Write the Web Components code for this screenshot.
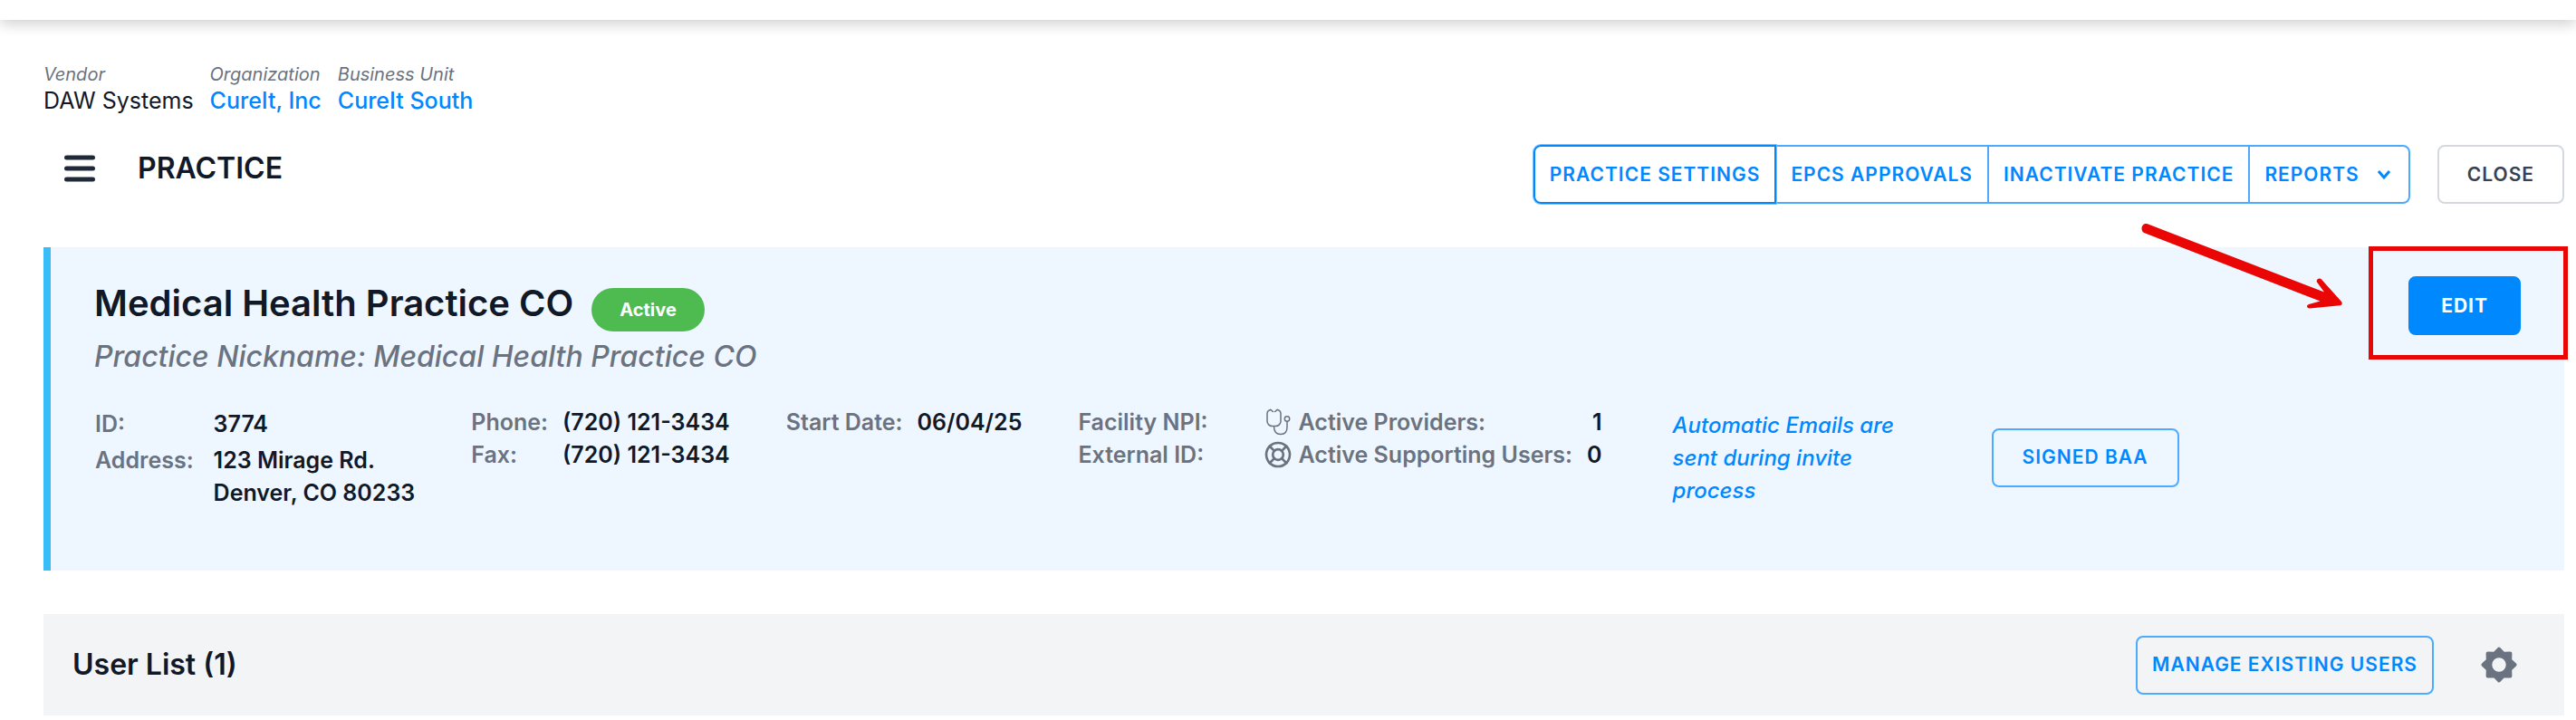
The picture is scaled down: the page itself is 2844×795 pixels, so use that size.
<!DOCTYPE html>
<html lang="en">
<head>
<meta charset="utf-8">
<title>Practice</title>
<style>
  body {
    margin: 0;
    background: #fff;
    color: #111827;
    font-family: Inter, "Liberation Sans", sans-serif;
    font-size: 25px;
    line-height: 36px;
    overflow-x: hidden;
  }
</style>
</head>
<body>
<practice-page></practice-page>

<script>
class AppButton extends HTMLElement {
  constructor() {
    super();
    this._root = this.attachShadow({ mode: "open" });
  }

  connectedCallback() {
    this._root.innerHTML = `
    <style>
      :host {
        display: inline-block;
        --edge: #4daaff;
      }
      button {
        display: flex;
        align-items: center;
        justify-content: center;
        gap: 18px;
        box-sizing: border-box;
        height: 65px;
        margin: 0;
        padding: 0 var(--button-pad, 16px);
        border: 2px solid var(--edge);
        border-radius: var(--button-radius, 8px);
        background: transparent;
        color: #0088ff;
        font: 600 21px/28px Inter, "Liberation Sans", sans-serif;
        letter-spacing: 1px;
        text-transform: uppercase;
        white-space: nowrap;
        cursor: pointer;
      }
      :host([variant="neutral"]) button {
        border-color: #d5d9df;
        color: #374151;
        background: #fff;
      }
      :host([variant="primary"]) button {
        border-color: #0088ff;
        background: #0088ff;
        color: #fff;
        font-weight: 700;
      }
      :host([selected]) button {
        border-color: #0088ff;
        box-shadow: 0 0 0 1px #80c4ff;
      }
    </style>
    <button type="button"><slot></slot></button>
    `;
  }
}
customElements.define("app-button", AppButton);

class ButtonGroup extends HTMLElement {
  constructor() {
    super();
    this._root = this.attachShadow({ mode: "open" });
  }

  connectedCallback() {
    this._root.innerHTML = `
    <style>
      :host {
        display: flex;
      }
      ::slotted(*) {
        --button-radius: 0;
        margin-left: -2px;
      }
      ::slotted(:first-child) {
        --button-radius: 8px 0 0 8px;
        margin-left: 0;
      }
      ::slotted(:last-child) {
        --button-radius: 0 8px 8px 0;
      }
      ::slotted([selected]) {
        position: relative;
        z-index: 1;
      }
    </style>
    <slot></slot>
    `;
  }
}
customElements.define("button-group", ButtonGroup);

const icons = {
  menu: `<path d="M3.5 6h29M3.5 18h29M3.5 30h29" fill="none" stroke="currentColor" stroke-width="5" stroke-linecap="round"/>`,
  chevron: `<path d="M3 2l6 7 6-7" fill="none" stroke="currentColor" stroke-width="3"/>`,
  stethoscope: `
    <g fill="none" stroke="currentColor" stroke-width="1.5" stroke-linecap="round" stroke-linejoin="round">
      <path d="M6.500 1.500c-2 .5-3.500 2-3.500 4.500v8c0 3 2.500 5.500 5.500 5.500h4c3 0 5.500-2.500 5.500-5.500V6c0-2.500-1.500-4-3.500-4.500"/>
      <path d="M6.500 1.500c1.500-.5 1.500 2 3 2M14.500 1.500c-1.500-.5-1.500 2-3 2"/>
      <path d="M10.500 20c0 5 2.500 8.500 7.500 8.500s7-3 7-8v-6"/>
      <circle cx="25" cy="11.500" r="2.700"/>
    </g>`,
  support: `
    <g fill="none" stroke="currentColor" stroke-width="2.700" stroke-linecap="round" stroke-linejoin="round">
      <circle cx="15" cy="15" r="13"/>
      <circle cx="15" cy="15" r="5.800"/>
      <path d="M5.800 5.800l5.100 5.100M24.200 5.800l-5.100 5.100M5.800 24.200l5.100-5.100M24.200 24.200l-5.100-5.100"/>
    </g>`,
  gear: `
    <path fill="currentColor" fill-rule="evenodd" stroke="currentColor" stroke-width="4" stroke-linejoin="round" d="M37.500 20L32.200 25 32.400 32.400 25 32.200 20 37.500 15 32.200 7.600 32.400 7.800 25 2.500 20 7.800 15 7.600 7.600 15 7.800 20 2.500 25 7.800 32.400 7.600 32.200 15zM20 29.700a9.700 9.700 0 1 0 0-19.400 9.700 9.700 0 0 0 0 19.400z"/>`
};

const iconBoxes = {
  menu: [36, 36],
  chevron: [20, 12],
  stethoscope: [30, 30],
  support: [30, 30],
  gear: [40, 40]
};

class AppIcon extends HTMLElement {
  constructor() {
    super();
    this._root = this.attachShadow({ mode: "open" });
  }

  connectedCallback() {
    const name = this.getAttribute("name");
    const [w, h] = iconBoxes[name];
    this._root.innerHTML = `
    <style>
      :host {
        display: inline-flex;
        flex: none;
      }
      svg {
        display: block;
      }
    </style>
    <svg width="${w}" height="${h}" viewBox="0 0 ${w} ${h}" aria-hidden="true">${icons[name]}</svg>
    `;
  }
}
customElements.define("app-icon", AppIcon);

class CrumbItem extends HTMLElement {
  constructor() {
    super();
    this._root = this.attachShadow({ mode: "open" });
  }

  connectedCallback() {
    const href = this.getAttribute("href");
    this._root.innerHTML = `
    <style>
      :host {
        display: block;
        line-height: 28px;
      }
      .label {
        color: #6b7280;
        font-size: 20px;
        font-style: italic;
      }
      .value {
        color: #111827;
        line-height: 30px;
      }
      a {
        color: #0088ff;
        font-weight: 500;
        text-decoration: none;
      }
    </style>
    <div class="label">${this.getAttribute("label")}</div>
    <div class="value">${href ? `<a href="${href}"><slot></slot></a>` : "<slot></slot>"}</div>
    `;
  }
}
customElements.define("crumb-item", CrumbItem);

class StatusBadge extends HTMLElement {
  constructor() {
    super();
    this._root = this.attachShadow({ mode: "open" });
  }

  connectedCallback() {
    this._root.innerHTML = `
    <style>
      :host {
        display: inline-block;
        padding: 0 31px;
        border-radius: 24px;
        background: #4dbb50;
        color: #fff;
        font-size: 20px;
        font-weight: 700;
        line-height: 48px;
      }
    </style>
    <slot></slot>
    `;
  }
}
customElements.define("status-badge", StatusBadge);

// red frame and arrow pointing at the slotted control
class CallOut extends HTMLElement {
  constructor() {
    super();
    this._root = this.attachShadow({ mode: "open" });
  }

  connectedCallback() {
    this._root.innerHTML = `
    <style>
      :host {
        display: block;
        position: relative;
      }
      .frame {
        position: absolute;
        inset: -33px -52px -27px -44px;
        border: 5px solid #eb0606;
        pointer-events: none;
      }
      svg {
        position: absolute;
        top: -60px;
        right: 196px;
        pointer-events: none;
      }
    </style>
    <slot></slot>
    <div class="frame"></div>
    <svg width="224" height="98" viewBox="0 0 224 98" fill="#eb0606" aria-hidden="true">
      <path d="M8 2.300L203 77.500 195 66.500C193.500 63.500 198 61 200 63.500L222 88C223.500 90 222.500 92 220.500 92.200L187 95.500C183.500 95.500 183 92 186 91L198.500 87.500 4 12C-1 9 2 0 8 2.300z"/>
    </svg>
    `;
  }
}
customElements.define("call-out", CallOut);

class DetailList extends HTMLElement {
  constructor() {
    super();
    this._root = this.attachShadow({ mode: "open" });
  }

  connectedCallback() {
    this._root.innerHTML = `
    <style>
      :host {
        display: grid;
        grid-template-columns: auto auto;
        column-gap: 16px;
        align-content: start;
        font-weight: 600;
        white-space: nowrap;
      }
      :host([spaced]) {
        row-gap: 4px;
        column-gap: 22px;
        padding: 2px 0 0 1px;
      }
      :host([empty]) {
        column-gap: 0;
      }
      ::slotted(dt) {
        display: flex;
        align-items: center;
        gap: 8px;
        height: 36px;
        color: #6b7280;
      }
      ::slotted(dd) {
        margin: 0;
      }
      :host([numeric]) ::slotted(dd) {
        text-align: right;
      }
    </style>
    <slot></slot>
    `;
  }
}
customElements.define("detail-list", DetailList);

class PracticeCard extends HTMLElement {
  constructor() {
    super();
    this._root = this.attachShadow({ mode: "open" });
  }

  connectedCallback() {
    this._root.innerHTML = `
    <style>
      :host {
        display: block;
        padding: 32px 48px 68px;
        border-left: 8px solid #38bdf8;
        background: #eef7ff;
      }
      .top {
        display: flex;
        justify-content: space-between;
        align-items: flex-start;
      }
      .name {
        display: flex;
        align-items: baseline;
        gap: 20px;
      }
      h2 {
        margin: 0;
        font-size: 40px;
        font-weight: 600;
        line-height: 60px;
      }
      .nickname {
        margin-top: 4px;
        color: #6b7280;
        font-size: 32px;
        font-style: italic;
        font-weight: 500;
        line-height: 48px;
      }
      .details {
        display: flex;
        gap: 62px;
        margin-top: 30px;
      }
      .note {
        width: 274px;
        margin: 4px 0 0 16px;
        color: #0088ff;
        font-size: 24px;
        font-style: italic;
        font-weight: 500;
      }
      .details app-button {
        align-self: center;
        margin-left: 16px;
        --button-pad: 32px;
      }
      call-out {
        --button-pad: 34px;
      }
      call-out app-button {
        display: block;
      }
    </style>
    <div class="top">
      <div>
        <div class="name">
          <h2>Medical Health Practice CO</h2>
          <status-badge>Active</status-badge>
        </div>
        <div class="nickname">Practice Nickname: Medical Health Practice CO</div>
      </div>
      <call-out><app-button variant="primary">Edit</app-button></call-out>
    </div>
    <div class="details">
      <detail-list spaced>
        <dt>ID:</dt><dd>3774</dd>
        <dt>Address:</dt><dd>123 Mirage Rd.<br>Denver, CO 80233</dd>
      </detail-list>
      <detail-list>
        <dt>Phone:</dt><dd>(720) 121-3434</dd>
        <dt>Fax:</dt><dd>(720) 121-3434</dd>
      </detail-list>
      <detail-list>
        <dt>Start Date:</dt><dd>06/04/25</dd>
      </detail-list>
      <detail-list empty>
        <dt>Facility NPI:</dt><dd></dd>
        <dt>External ID:</dt><dd></dd>
      </detail-list>
      <detail-list numeric>
        <dt><app-icon name="stethoscope"></app-icon>Active Providers:</dt><dd>1</dd>
        <dt><app-icon name="support"></app-icon>Active Supporting Users:</dt><dd>0</dd>
      </detail-list>
      <div class="note">Automatic Emails are sent during invite process</div>
      <app-button>Signed BAA</app-button>
    </div>
    `;
  }
}
customElements.define("practice-card", PracticeCard);

class UserListBar extends HTMLElement {
  constructor() {
    super();
    this._root = this.attachShadow({ mode: "open" });
  }

  connectedCallback() {
    this._root.innerHTML = `
    <style>
      :host {
        display: flex;
        align-items: center;
        height: 112px;
        padding: 0 52px 0 32px;
        background: #f3f4f6;
      }
      h2 {
        flex: 1;
        margin: 0;
        font-size: 32px;
        font-weight: 600;
        line-height: 48px;
      }
      .gear {
        display: flex;
        margin-left: 52px;
        padding: 0;
        border: 0;
        background: none;
        color: #6b7280;
        cursor: pointer;
      }
    </style>
    <h2>User List (1)</h2>
    <app-button>Manage Existing Users</app-button>
    <button class="gear" type="button" aria-label="Settings"><app-icon name="gear"></app-icon></button>
    `;
  }
}
customElements.define("user-list-bar", UserListBar);

class PracticePage extends HTMLElement {
  constructor() {
    super();
    this._root = this.attachShadow({ mode: "open" });
  }

  connectedCallback() {
    this._root.innerHTML = `
    <style>
      :host {
        display: block;
      }
      header {
        height: 22px;
        background: #fff;
        box-shadow: 0 4px 16px rgba(0, 0, 0, .2);
      }
      main {
        display: flex;
        flex-direction: column;
        gap: 48px;
        padding: 46px 13px 5px 48px;
      }
      .crumbs {
        display: flex;
        gap: 18px;
        margin-bottom: -14px;
      }
      .heading {
        display: flex;
        align-items: flex-start;
      }
      .menu {
        display: flex;
        align-items: center;
        height: 52px;
        margin: 0 46px 0 22px;
        padding: 0;
        border: 0;
        background: none;
        color: #1f2937;
        cursor: pointer;
      }
      h1 {
        flex: 1;
        margin: 0;
        font-size: 32px;
        font-weight: 600;
        line-height: 52px;
      }
      .close {
        margin-left: 30px;
        --button-pad: 31px;
      }
    </style>
    <header></header>
    <main>
      <nav class="crumbs" aria-label="Breadcrumb">
        <crumb-item label="Vendor">DAW Systems</crumb-item>
        <crumb-item label="Organization" href="#organization">CureIt, Inc</crumb-item>
        <crumb-item label="Business Unit" href="#unit">CureIt South</crumb-item>
      </nav>
      <div class="heading">
        <button class="menu" type="button" aria-label="Menu"><app-icon name="menu"></app-icon></button>
        <h1>PRACTICE</h1>
        <button-group>
          <app-button selected>Practice Settings</app-button>
          <app-button>EPCS Approvals</app-button>
          <app-button>Inactivate Practice</app-button>
          <app-button>Reports <app-icon name="chevron"></app-icon></app-button>
        </button-group>
        <app-button class="close" variant="neutral">Close</app-button>
      </div>
      <practice-card></practice-card>
      <user-list-bar></user-list-bar>
    </main>
    `;
  }
}
customElements.define("practice-page", PracticePage);
</script>
</body>
</html>
